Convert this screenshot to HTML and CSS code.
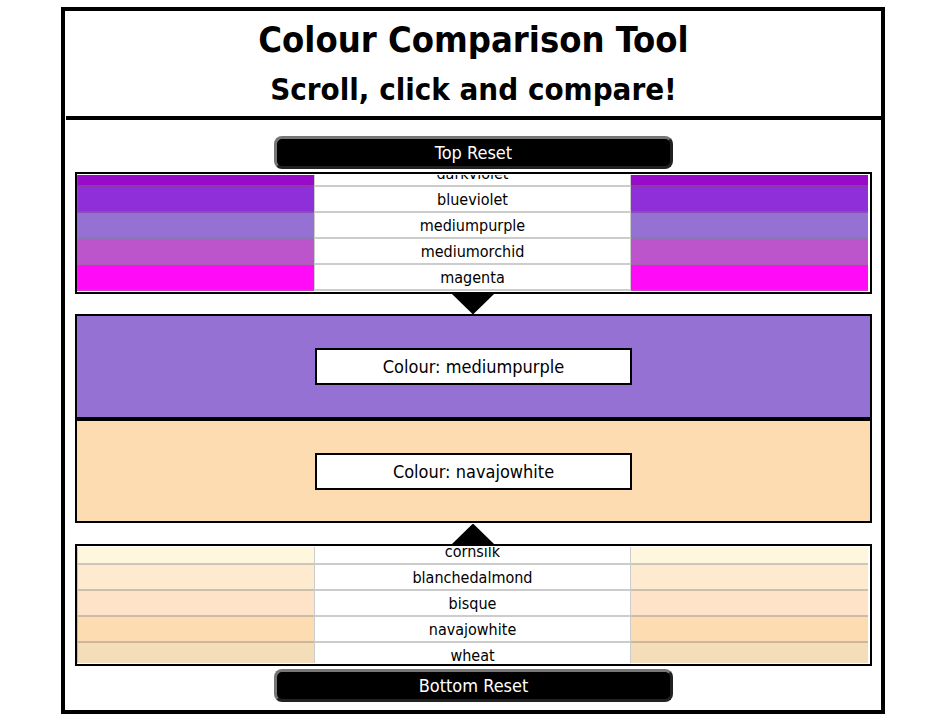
FILE: index.html
```html
<!DOCTYPE html>
<html lang="en">
<head>
<meta charset="utf-8">
<title>Colour Comparison Tool</title>
<link rel="stylesheet" href="styles.css">
</head>
<body>
<main class="tool">
  <header class="header">
    <h1 class="title">Colour Comparison Tool</h1>
    <h2 class="subtitle">Scroll, click and compare!</h2>
  </header>
  <div class="content">
    <button class="reset" type="button">Top Reset</button>
    <div class="list">
      <div class="scroller" data-scroll="14">
        <table class="colours">
          <tr><td class="darkviolet"></td><td class="name">darkviolet</td><td class="darkviolet"></td></tr>
          <tr><td class="blueviolet"></td><td class="name">blueviolet</td><td class="blueviolet"></td></tr>
          <tr><td class="mediumpurple"></td><td class="name">mediumpurple</td><td class="mediumpurple"></td></tr>
          <tr><td class="mediumorchid"></td><td class="name">mediumorchid</td><td class="mediumorchid"></td></tr>
          <tr><td class="magenta"></td><td class="name">magenta</td><td class="magenta"></td></tr>
        </table>
      </div>
    </div>
    <svg class="arrow" viewBox="0 0 43 20" aria-hidden="true"><path d="M0 0H42L21 20.500Z"/></svg>
    <section class="panels">
      <div class="panel mediumpurple"><p class="label">Colour: mediumpurple</p></div>
      <div class="panel navajowhite"><p class="label">Colour: navajowhite</p></div>
    </section>
    <svg class="arrow arrow-up" viewBox="0 0 43 20" aria-hidden="true"><path d="M0 20H42L21 -0.500Z"/></svg>
    <div class="list">
      <div class="scroller" data-scroll="8">
        <table class="colours">
          <tr><td class="cornsilk"></td><td class="name">cornsilk</td><td class="cornsilk"></td></tr>
          <tr><td class="blanchedalmond"></td><td class="name">blanchedalmond</td><td class="blanchedalmond"></td></tr>
          <tr><td class="bisque"></td><td class="name">bisque</td><td class="bisque"></td></tr>
          <tr><td class="navajowhite"></td><td class="name">navajowhite</td><td class="navajowhite"></td></tr>
          <tr><td class="wheat"></td><td class="name">wheat</td><td class="wheat"></td></tr>
        </table>
      </div>
    </div>
    <button class="reset" type="button">Bottom Reset</button>
  </div>
</main>
<script src="script.js"></script>
</body>
</html>
```
FILE: styles.css
```css
* { box-sizing: border-box; }

body {
  margin: 7px 55px 0 61px;
  background: #fff;
  color: #000;
  font-family: Tahoma, "DejaVu Sans Condensed", "DejaVu Sans", sans-serif;
  font-size: 16px;
}

.tool { border: 4px solid #000; }

.header {
  margin-left: 1px;
  padding: 6px 0;
  border-bottom: 4px solid #000;
  text-align: center;
}

.title, .subtitle { margin: 0; font-weight: bold; }
.title { font-size: 36px; line-height: 46px; }
.subtitle { padding-top: 5px; font-size: 31px; line-height: 42px; }

.content {
  display: flex;
  flex-direction: column;
  align-items: center;
  padding: 16px 9px 8px 10px;
}

.reset {
  width: 50%;
  height: 33px;
  padding: 0;
  border: 3px solid;
  border-color: #767676 #212121 #212121 #767676;
  border-radius: 8px;
  background: #000;
  color: #fff;
  font: inherit;
  font-size: 18px;
}

.list {
  width: 100%;
  margin-top: 3px;
  padding: 1px 2px 1px 0;
  border: 2px solid #000;
}

.list + .reset { margin-top: 3px; }

.scroller {
  height: 116px;
  overflow-y: scroll;
  scrollbar-width: none;
}

.colours {
  width: 100%;
  table-layout: fixed;
  border-spacing: 0;
}

.colours td {
  width: 30%;
  height: 26px;
  padding: 0;
  border-bottom: 2px solid rgba(128, 128, 128, 0.4);
}

.colours td:first-child { border-left: 1px solid rgba(128, 128, 128, 0.4); }

.colours .name {
  width: 40%;
  padding-top: 2px;
  border-right: 1px solid #ccc;
  border-left: 1px solid #ccc;
  text-align: center;
  line-height: 22px;
}

.arrow { display: block; width: 43px; height: 20px; }
.arrow-up { margin-top: 1px; }
.arrow + .list { margin-top: 0; }

.panels { width: 100%; }

.panel {
  display: flex;
  align-items: center;
  justify-content: center;
  height: 105px;
  border: 2px solid #000;
}

.panel + .panel { height: 104px; }

.label {
  width: 40%;
  margin: 0;
  border: 2px solid #000;
  background: #fff;
  font-size: 18px;
  line-height: 33px;
  text-align: center;
}

.darkviolet { background: #970bc9; }
.blueviolet { background: #8e2fda; }
.mediumpurple { background: #9571d4; }
.mediumorchid { background: #bc54cb; }
.magenta { background: #ff0bf8; }
.cornsilk { background: #fff6de; }
.blanchedalmond { background: #feeace; }
.bisque { background: #fee3c8; }
.navajowhite { background: #fddcb1; }
.wheat { background: #f4deb9; }
```
FILE: script.js
```js
document.querySelectorAll(".scroller").forEach(function (scroller) {
  scroller.scrollTop = Number(scroller.dataset.scroll);
});
```
